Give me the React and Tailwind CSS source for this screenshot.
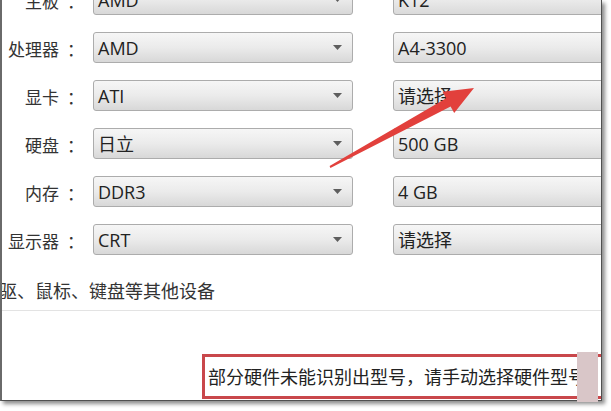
import React from "react";

const rows = [
  { label: "主板", left: "AMD", right: "K12" },
  { label: "处理器", left: "AMD", right: "A4-3300" },
  { label: "显卡", left: "ATI", right: "请选择" },
  { label: "硬盘", left: "日立", right: "500 GB" },
  { label: "内存", left: "DDR3", right: "4 GB" },
  { label: "显示器", left: "CRT", right: "请选择" },
];

function Caret() {
  return (
    <svg width="9" height="5" viewBox="0 0 9 5" className="shrink-0">
      <polygon points="0,0 9,0 4.5,5" fill="#5e5e5e" />
    </svg>
  );
}

function Row({ label, left, right }) {
  return (
    <div className="flex h-[31px] items-stretch shrink-0">
      <div className="w-[74px] shrink-0 flex items-center justify-end pt-[3px] text-[17px] text-[#333] font-['Noto_Sans_CJK_SC',sans-serif] whitespace-nowrap">
        <span>{label}</span>
        <span className="w-[17px] pl-[8px] text-left">：</span>
      </div>
      <div className="ml-[17px] w-[260px] shrink-0 flex items-center justify-between pl-[4px] pr-[10px] border border-[#acacac] rounded-[3px] bg-gradient-to-b from-[#f6f6f6] via-[#ebebeb] to-[#d8d8d8] text-[18px] text-[#222]">
        <span className="leading-none">{left}</span>
        <Caret />
      </div>
      <div className="ml-[40px] w-[260px] shrink-0 flex items-center pl-[4px] border border-[#acacac] rounded-[3px] bg-gradient-to-b from-[#f6f6f6] via-[#ebebeb] to-[#dadada] text-[18px] text-[#222]">
        <span className="leading-none">{right}</span>
      </div>
    </div>
  );
}

export default function App() {
  return (
    <div className="relative w-[611px] h-[411px] bg-white overflow-hidden font-['Open_Sans','Noto_Sans_CJK_SC',sans-serif]">
      <div className="w-[602px] h-[401px] bg-white border-l-2 border-r border-b border-l-[#6a6a6a] border-r-[#505050] border-b-[#505050] overflow-hidden shadow-[3px_3px_4px_rgba(0,0,0,0.45)]">
        <div className="flex flex-col mt-[-16px]">
          <div className="flex flex-col gap-[17px]">
            {rows.map((r, i) => (
              <Row key={i} {...r} />
            ))}
          </div>
          <div className="mt-[23px] h-[24px] ml-[-3px] flex items-center text-[18px] text-[#333] font-['Noto_Sans_CJK_SC',sans-serif] whitespace-nowrap">
            驱、鼠标、键盘等其他设备
          </div>
          <div className="mt-[8px] h-px bg-[#e3e3e3]" />
          <div className="mt-[43px] ml-[200px] h-[45px] w-[420px] border-[3px] border-[#c9474b] bg-white flex items-center pl-[3px] text-[18px] text-[#222] font-['Noto_Sans_CJK_SC',sans-serif] whitespace-nowrap overflow-hidden">
            部分硬件未能识别出型号，请手动选择硬件型号
          </div>
        </div>
      </div>
      <div className="absolute left-[577px] top-[352px] w-[21px] h-[50px] bg-[#d9c6c8]" />
      <svg className="absolute left-0 top-0" width="611" height="411" viewBox="0 0 611 411">
        <polygon
          points="330.4,167.9 329.6,166.1 446.2,98.3 442.6,91.7 474,88 454.2,113.1 450.6,106.5"
          fill="#e2403c"
        />
      </svg>
    </div>
  );
}
